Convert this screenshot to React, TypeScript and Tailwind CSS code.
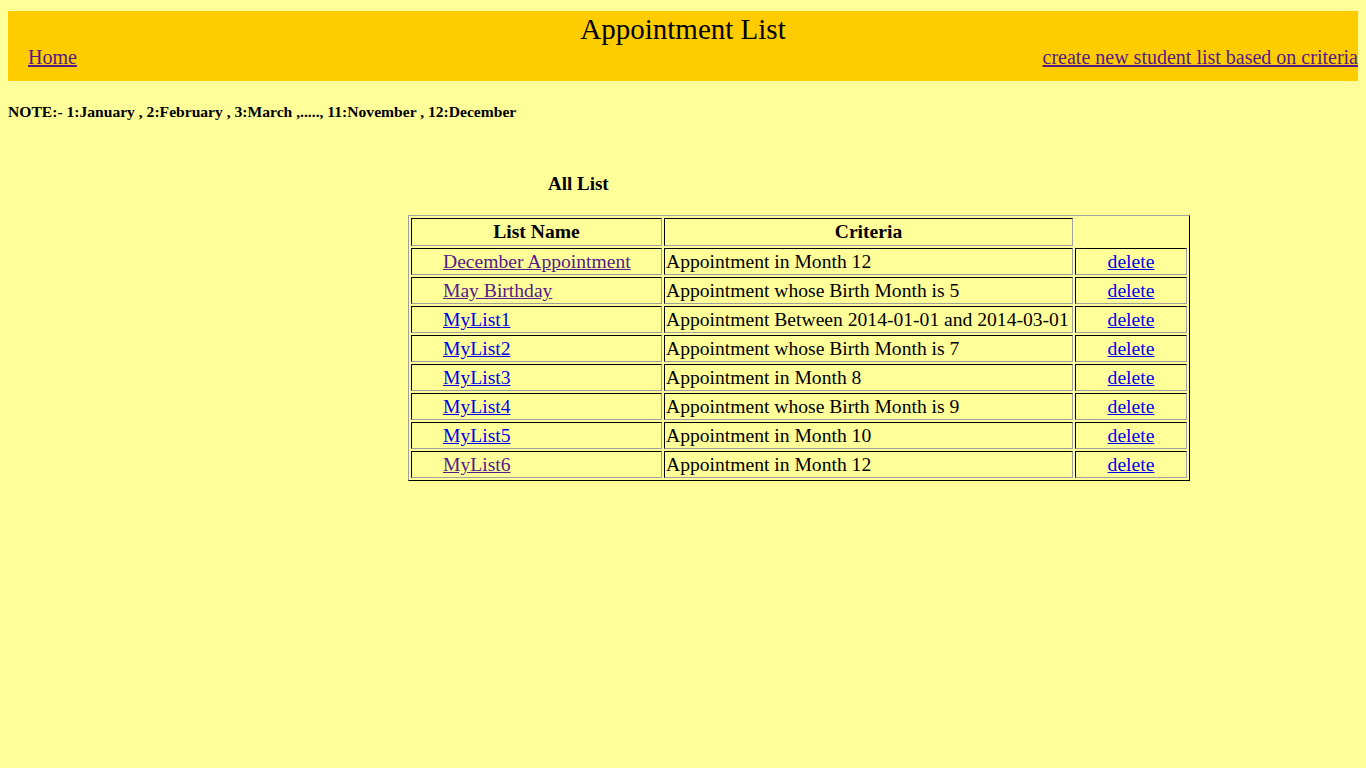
const lists = [
  { name: "December Appointment", criteria: "Appointment in Month 12", visited: true },
  { name: "May Birthday", criteria: "Appointment whose Birth Month is 5", visited: true },
  { name: "MyList1", criteria: "Appointment Between 2014-01-01 and 2014-03-01", visited: false },
  { name: "MyList2", criteria: "Appointment whose Birth Month is 7", visited: false },
  { name: "MyList3", criteria: "Appointment in Month 8", visited: false },
  { name: "MyList4", criteria: "Appointment whose Birth Month is 9", visited: false },
  { name: "MyList5", criteria: "Appointment in Month 10", visited: false },
  { name: "MyList6", criteria: "Appointment in Month 12", visited: true },
];

const cell =
  "border border-t-black border-l-black border-r-[#a0a0a0] border-b-[#a0a0a0] p-[1px]";

export default function App() {
  return (
    <div
      className="min-h-[768px] bg-[#ffff99] px-2 pt-[11px] text-black"
      style={{ fontFamily: '"Liberation Serif", "Times New Roman", serif' }}
    >
      <header className="bg-[#ffcc00] pt-[2px] pb-[12px]">
        <h1 className="text-center text-[29px] leading-[33px]">Appointment List</h1>
        <div className="flex justify-between pl-5 text-[20px] leading-[23px]">
          <a href="#" className="text-[#551a8b] underline">
            Home
          </a>
          <a href="#" className="text-[#551a8b] underline">
            create new student list based on criteria
          </a>
        </div>
      </header>

      <p className="mt-[22px] text-[15.6px] font-bold leading-[18px]">
        NOTE:- 1:January , 2:February , 3:March ,....., 11:November , 12:December
      </p>

      <div className="ml-[400px] mt-[52px]">
        <h3 className="ml-[140px] text-[19px] font-bold leading-[22px]">All List</h3>
        <table className="mt-[20px] border-separate border-spacing-[2px] border border-t-[#a0a0a0] border-l-[#a0a0a0] border-r-black border-b-black text-[19.6px]">
          <thead>
            <tr>
              <th className={`${cell} w-[251px] font-bold leading-[24px]`}>List Name</th>
              <th className={`${cell} w-[409px] font-bold leading-[24px]`}>Criteria</th>
              <th className="w-[112px]"></th>
            </tr>
          </thead>
          <tbody>
            {lists.map((l) => (
              <tr key={l.name}>
                <td className={`${cell} pl-[31px] leading-[23px]`}>
                  <a
                    href="#"
                    className={`underline ${l.visited ? "text-[#551a8b]" : "text-[#0000ee]"}`}
                  >
                    {l.name}
                  </a>
                </td>
                <td className={`${cell} whitespace-nowrap leading-[23px]`}>{l.criteria}</td>
                <td className={`${cell} text-center leading-[23px]`}>
                  <a href="#" className="text-[#0000ee] underline">
                    delete
                  </a>
                </td>
              </tr>
            ))}
          </tbody>
        </table>
      </div>
    </div>
  );
}
